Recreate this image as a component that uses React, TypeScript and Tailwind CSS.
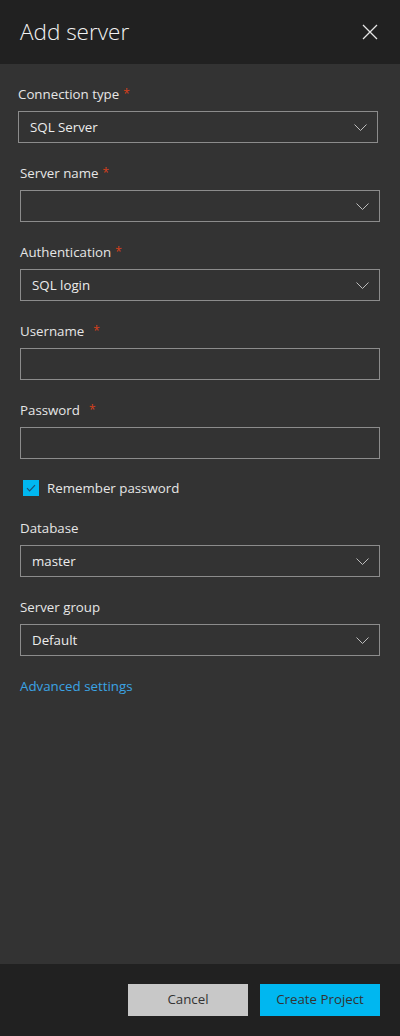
import React from 'react';

const font = { fontFamily: '"Open Sans", "Noto Sans", "Liberation Sans", sans-serif' };

const Chevron = () => (
  <svg width="13" height="7" viewBox="0 0 13 7" fill="none" className="shrink-0">
    <path d="M0.5 0.5l6 6 6-6" stroke="#bdbdbd" strokeWidth="1" />
  </svg>
);

interface FieldProps {
  label: string;
  required?: boolean;
  value?: string;
  select?: boolean;
  gap?: string;
}

const Field: React.FC<FieldProps> = ({ label, required, value, select, gap = 'ml-[4px]' }) => (
  <div className="flex flex-col">
    <div className="h-[24px] mb-[5px] pt-[2px] flex items-center text-[13.3px] text-[#e6e6e6]">
      {label}
      {required && <span className={`text-[#d8401c] ${gap} text-[12px] relative -top-[1px]`}>*</span>}
    </div>
    <div className="h-[32px] border border-[#8c8c8c] flex items-center justify-between pl-[11px] pr-[10px] pt-[1px] text-[13.3px] text-[#ececec]">
      <span>{value}</span>
      {select && <Chevron />}
    </div>
  </div>
);

export default function App() {
  return (
    <div style={font} className="w-[400px] h-[1036px] flex flex-col bg-[#333333]">
      {/* header */}
      <div className="h-[64px] bg-[#212121] flex items-center justify-between pl-[20px] pr-[22px] shrink-0">
        <h1 className="text-[22.5px] font-light text-[#f2f2f2]">Add server</h1>
        <svg width="16" height="16" viewBox="0 0 16 16" fill="none">
          <path d="M1 1l14 14M15 1L1 15" stroke="#e6e6e6" strokeWidth="1.3" />
        </svg>
      </div>

      {/* body */}
      <div className="flex-1 flex flex-col pt-[18px] px-[20px]">
        <div className="-ml-[2px] mr-[2px]">
          <Field label="Connection type" required value="SQL Server" select />
        </div>
        <div className="mt-[18px] flex flex-col gap-[18px]">
          <Field label="Server name" required select />
          <Field label="Authentication" required value="SQL login" select />
          <Field label="Username" required gap="ml-[9px]" />
          <Field label="Password" required gap="ml-[9px]" />
        </div>

        <div className="mt-[21px] h-[16px] flex items-center gap-[8px] pl-[3px]">
          <div className="w-[16px] h-[16px] bg-[#00b7f0] flex items-center justify-center">
            <svg width="10" height="8" viewBox="0 0 10 8" fill="none">
              <path d="M1 4.2l2.6 2.6L9 1.2" stroke="#1d4f73" strokeWidth="1.2" />
            </svg>
          </div>
          <span className="text-[13.3px] text-[#e6e6e6] pt-[1px]">Remember password</span>
        </div>

        <div className="mt-[20px] flex flex-col gap-[18px]">
          <Field label="Database" value="master" select />
          <Field label="Server group" value="Default" select />
        </div>

        <div className="mt-[18px] h-[24px] pt-[2px] flex items-center text-[13.3px] text-[#3ba3e3]">Advanced settings</div>
      </div>

      {/* footer */}
      <div className="h-[72px] bg-[#212121] flex items-start justify-end gap-[12px] pt-[20px] pr-[20px] shrink-0">
        <button className="w-[120px] h-[32px] bg-[#c8c8c8] text-[13.3px] text-[#333333]">Cancel</button>
        <button className="w-[120px] h-[32px] bg-[#00b7f0] text-[13.3px] text-[#333333]">Create Project</button>
      </div>
    </div>
  );
}
